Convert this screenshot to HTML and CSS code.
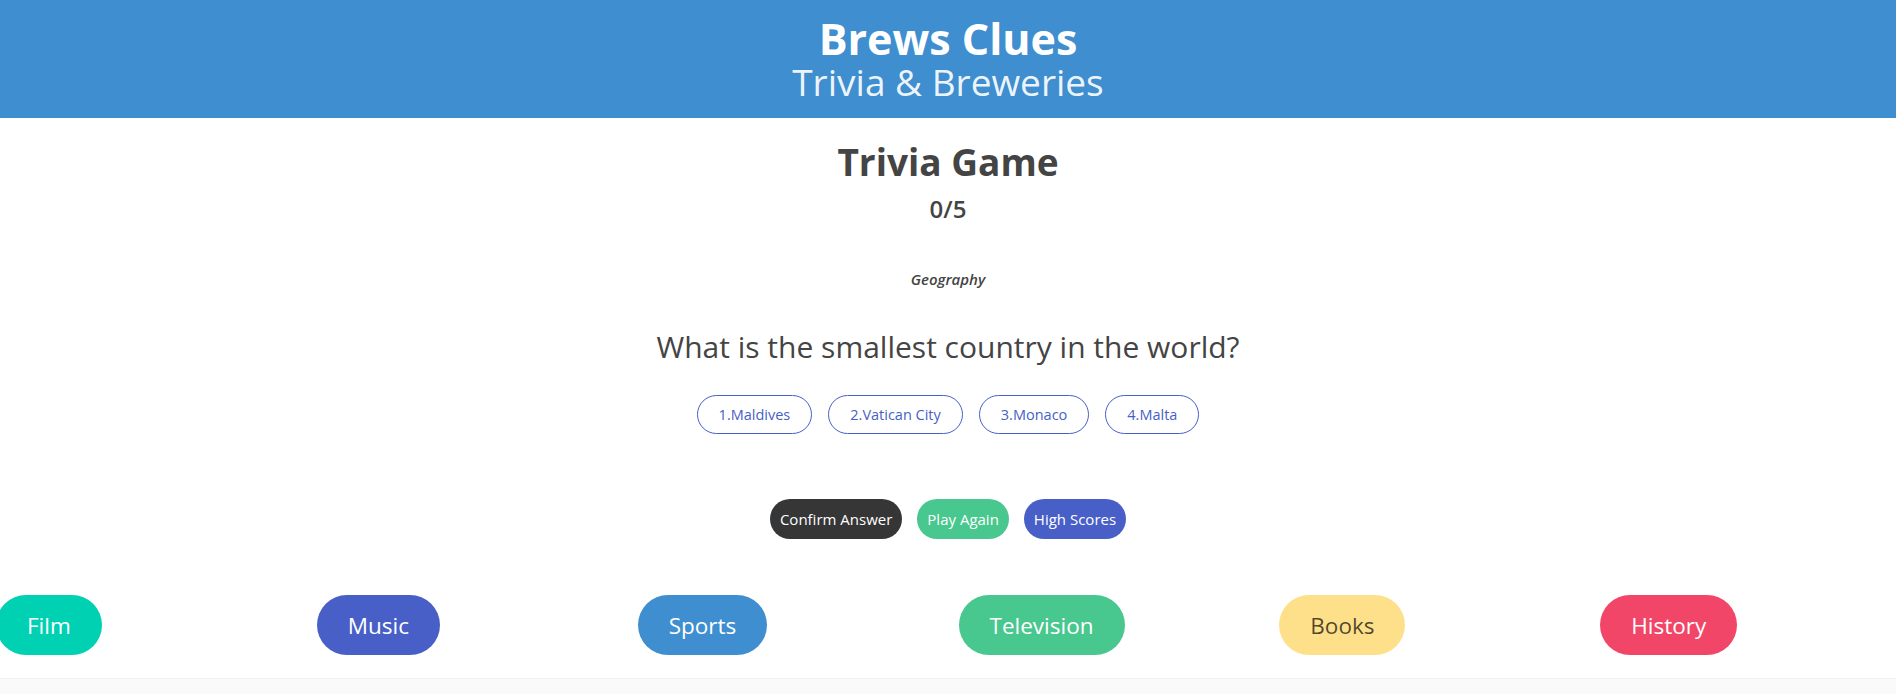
FILE: index.html
```html
<!DOCTYPE html>
<html lang="en">
<head>
<meta charset="utf-8">
<title>Brews Clues</title>
<link rel="stylesheet" href="styles.css">
</head>
<body>
<div class="page">
  <header class="hero">
    <h1 class="hero-title">Brews Clues</h1>
    <h2 class="hero-subtitle">Trivia &amp; Breweries</h2>
  </header>
  <main class="game">
    <h2 class="game-title">Trivia Game</h2>
    <p class="score">0/5</p>
    <p class="category">Geography</p>
    <p class="question">What is the smallest country in the world?</p>
    <div class="answers">
      <button class="answer">1.Maldives</button>
      <button class="answer">2.Vatican City</button>
      <button class="answer">3.Monaco</button>
      <button class="answer">4.Malta</button>
    </div>
    <div class="actions">
      <button class="action dark">Confirm Answer</button>
      <button class="action green">Play Again</button>
      <button class="action blue">High Scores</button>
    </div>
    <div class="cat-wrap">
      <div class="categories">
        <button class="cat film">Film</button>
        <button class="cat music">Music</button>
        <button class="cat sports">Sports</button>
        <button class="cat tv">Television</button>
        <button class="cat books">Books</button>
        <button class="cat history">History</button>
      </div>
    </div>
  </main>
  <footer class="footer"></footer>
</div>
</body>
</html>
```
FILE: styles.css
```css
html, body {
  margin: 0;
  padding: 0;
  height: 100%;
  overflow: hidden;
  background: #fff;
}
body {
  font-family: "Open Sans", "Noto Sans", sans-serif;
  color: #4a4a4a;
}
.page {
  display: flex;
  flex-direction: column;
  height: 100%;
}
.hero {
  background: #3e8ed0;
  padding: 16px 0;
  text-align: center;
  color: #fff;
}
.hero-title {
  margin: 0;
  font-size: 43px;
  line-height: 46px;
  font-weight: 700;
}
.hero-subtitle {
  margin: 0;
  font-size: 37px;
  line-height: 40px;
  font-weight: 400;
  color: rgba(255, 255, 255, 0.92);
}
.game {
  display: flex;
  flex-direction: column;
  align-items: center;
  padding-top: 20px;
}
.game-title {
  margin: 0;
  font-size: 37px;
  line-height: 48px;
  font-weight: 700;
  color: #444;
}
.score {
  margin: 8px 0 0;
  font-size: 24px;
  line-height: 30px;
  font-weight: 600;
  color: #444;
}
.category {
  margin: 45px 0 0;
  font-size: 15px;
  line-height: 20px;
  font-style: italic;
  font-weight: 600;
  color: #444;
}
.question {
  margin: 40px 0 0;
  font-size: 30px;
  line-height: 36px;
  color: #444;
}
button {
  font-family: inherit;
  cursor: pointer;
}
.answers {
  margin-top: 30px;
  display: flex;
  gap: 16px;
}
.answer {
  height: 39px;
  padding: 0 21px;
  border: 1px solid #485fc7;
  border-radius: 9999px;
  background: #fff;
  color: #485fc7;
  font-size: 14.5px;
}
.actions {
  margin-top: 65px;
  display: flex;
  gap: 15px;
}
.action {
  height: 40px;
  padding: 0 10px;
  border: none;
  border-radius: 9999px;
  color: #fff;
  font-size: 15px;
}
.dark { background: #363636; }
.green { background: #48c78e; }
.blue { background: #485fc7; }
.cat-wrap {
  margin-top: 56px;
  align-self: stretch;
}
.categories {
  display: grid;
  grid-template-columns: repeat(6, 1fr);
  width: calc(100% + 29px);
  margin-left: -4px;
}
.cat {
  justify-self: start;
  height: 60px;
  padding: 0 31px;
  border: none;
  border-radius: 9999px;
  color: #fff;
  font-size: 22.5px;
}
.film { background: #00d1b2; }
.music { background: #485fc7; }
.sports { background: #3e8ed0; }
.tv { background: #48c78e; }
.books { background: #ffe08a; color: rgba(0, 0, 0, 0.7); }
.history { background: #f14668; }
.footer {
  margin-top: 23px;
  flex: 1;
  background: #fafafa;
  border-top: 1px solid #f0f0f0;
}
```
